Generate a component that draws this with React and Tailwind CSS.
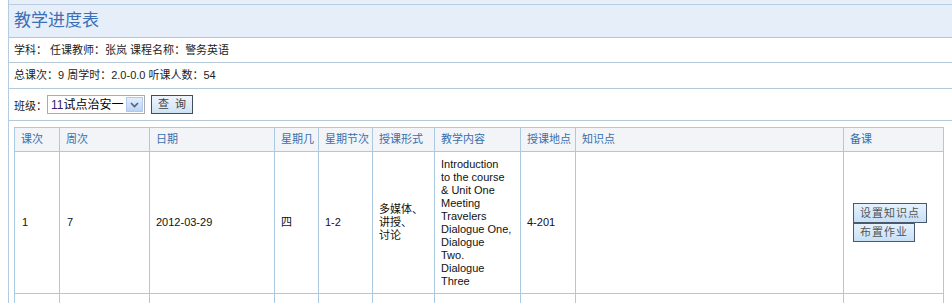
import React from 'react';

const FONT = '"Liberation Sans", "Noto Sans CJK SC", sans-serif';

const columns = [
  { name: '课次', width: 45 },
  { name: '周次', width: 90 },
  { name: '日期', width: 125 },
  { name: '星期几', width: 44 },
  { name: '星期节次', width: 54 },
  { name: '授课形式', width: 62 },
  { name: '教学内容', width: 86 },
  { name: '授课地点', width: 55 },
  { name: '知识点', width: 268 },
  { name: '备课', width: 100 },
];

const contentLines = [
  'Introduction',
  'to the course',
  '& Unit One',
  'Meeting',
  'Travelers',
  'Dialogue One,',
  'Dialogue',
  'Two.',
  'Dialogue',
  'Three',
];

// full-width colon kept at one em
const Colon = () => <span className="inline-block w-[1em]">：</span>;

const Lines = ({ items }) => (
  <div className="leading-[13px]">
    {items.map((line, i) => (
      <div key={i}>{line}</div>
    ))}
  </div>
);

const SmallButton = ({ children, className = '' }) => (
  <div
    className={`flex items-center shrink-0 whitespace-nowrap px-[6px] border border-[#4a5a6c] bg-gradient-to-b from-[#e6f2fd] to-[#c6e0f6] text-[#555] text-[11px] tracking-[1px] ${className}`}
  >
    {children}
  </div>
);

const App = () => {
  return (
    <div className="w-[952px] h-[303px] overflow-hidden bg-white pl-[8px]" style={{ fontFamily: FONT }}>
      <div className="border-l border-[#b4cbe0] h-full">
        {/* top strip */}
        <div className="h-[5px] bg-[#e9eff9] border-b border-[#b7cde3]" />

        {/* title */}
        <div className="h-[33px] flex items-center pl-[5px] bg-[#e6eefa] border-b border-[#aac7df]">
          <span className="text-[17px] text-[#3c70b6]">教学进度表</span>
        </div>

        {/* info rows */}
        <div className="h-[25px] flex items-center pl-[5px] border-b border-[#b5c9d9] text-[11px] text-[#222] whitespace-pre">
          学科<Colon /> 任课教师<Colon />张岚 课程名称<Colon />警务英语
        </div>
        <div className="h-[26px] flex items-center pl-[5px] border-b border-[#b5c9d9] text-[11px] text-[#222] whitespace-pre">
          总课次<Colon />9 周学时<Colon />2.0-0.0 听课人数<Colon />54
        </div>
        <div className="h-[32px] flex items-start pt-[6px] pl-[5px] border-b border-[#b5c9d9] text-[11px] text-[#222]">
          <span className="mt-[3px] w-[33px]">班级<Colon /></span>
          <div className="flex items-center w-[98px] h-[19px] border border-[#a5acb5] bg-white overflow-hidden">
            <span className="flex-1 pl-[3px] text-[12px] text-black whitespace-nowrap overflow-hidden">
              <span className="text-[#3a1a6a]">11</span>试点治安一
            </span>
            <span className="flex items-center justify-center w-[17px] h-[15px] mr-[1px] border border-[#b3c8ec] bg-gradient-to-b from-[#e4eefd] to-[#bcd2f5]">
              <svg width="9" height="6" viewBox="0 0 9 6">
                <path d="M1 1 L4.5 4.5 L8 1" stroke="#4d6185" strokeWidth="1.6" fill="none" />
              </svg>
            </span>
          </div>
          <div className="ml-[6px] flex items-center justify-center w-[42px] h-[19px] border border-[#404d5c] bg-gradient-to-b from-[#eef5fc] to-[#cfe2f4] text-[11px] text-[#444] whitespace-pre">
            查  询
          </div>
        </div>

        {/* table */}
        <div className="pt-[6px] pl-[5px]">
          <table className="table-fixed border-collapse w-[930px] text-[11px]">
            <colgroup>
              {columns.map((c) => (
                <col key={c.name} style={{ width: c.width }} />
              ))}
            </colgroup>
            <thead>
              <tr className="h-[24px] bg-[#f2f4f8]">
                {columns.map((c) => (
                  <th
                    key={c.name}
                    className="border border-[#abc9e1] pl-[6px] text-left font-normal text-[#3a6fab] whitespace-nowrap overflow-hidden"
                  >
                    {c.name}
                  </th>
                ))}
              </tr>
            </thead>
            <tbody className="text-[#111]">
              <tr className="h-[142px]">
                <td className="border border-[#abc9e1] pl-[7px] align-middle">1</td>
                <td className="border border-[#abc9e1] pl-[7px] align-middle">7</td>
                <td className="border border-[#abc9e1] pl-[6px] align-middle">2012-03-29</td>
                <td className="border border-[#abc9e1] pl-[6px] align-middle">四</td>
                <td className="border border-[#abc9e1] pl-[6px] align-middle">1-2</td>
                <td className="border border-[#abc9e1] pl-[6px] align-middle">
                  <Lines items={['多媒体、', '讲授、', '讨论']} />
                </td>
                <td className="border border-[#abc9e1] pl-[6px] align-middle">
                  <Lines items={contentLines} />
                </td>
                <td className="border border-[#abc9e1] pl-[6px] align-middle">4-201</td>
                <td className="border border-[#abc9e1] align-middle" />
                <td className="border border-[#abc9e1] pl-[9px] align-middle">
                  <div className="flex flex-col items-start">
                    <SmallButton className="h-[20px]">设置知识点</SmallButton>
                    <SmallButton className="h-[19px]">布置作业</SmallButton>
                  </div>
                </td>
              </tr>
              <tr className="h-[142px]">
                {columns.map((c) => (
                  <td key={c.name} className="border border-[#abc9e1]" />
                ))}
              </tr>
            </tbody>
          </table>
        </div>
      </div>
    </div>
  );
};

export default App;
